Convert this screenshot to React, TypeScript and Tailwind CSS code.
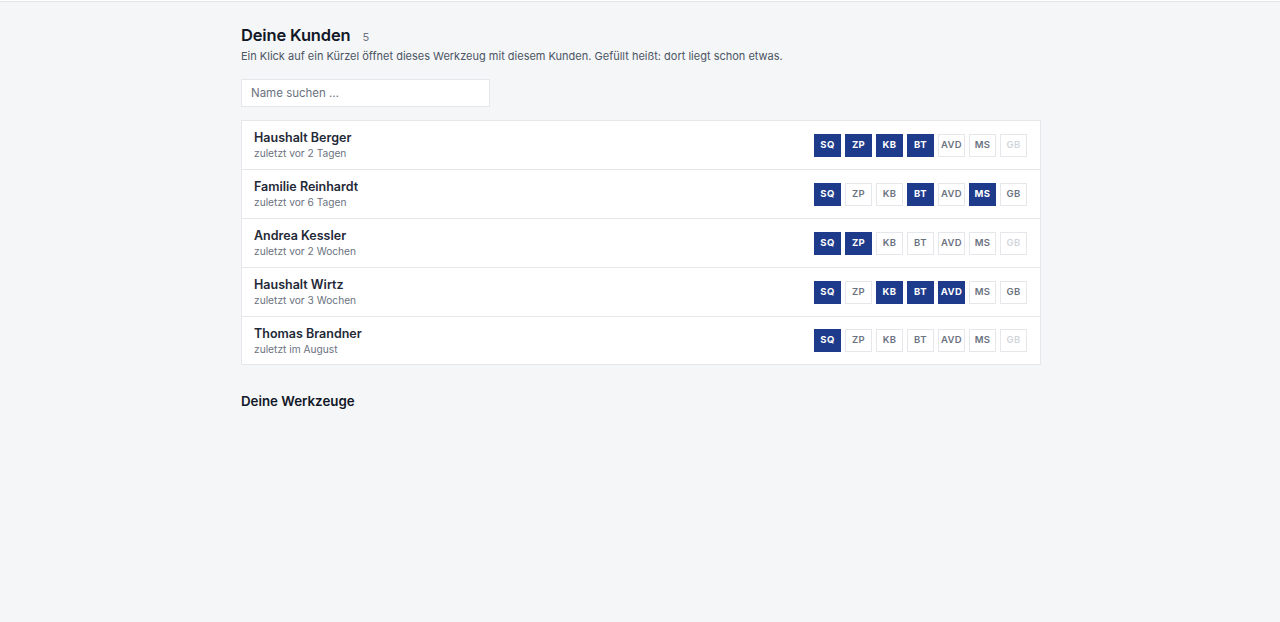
import React from "react";

type Kunde = {
  name: string;
  zuletzt: string;
  filled: string[];
  disabled?: string[];
};

const TOOLS = ["SQ", "ZP", "KB", "BT", "AVD", "MS", "GB"];

const KUNDEN: Kunde[] = [
  { name: "Haushalt Berger", zuletzt: "zuletzt vor 2 Tagen", filled: ["SQ", "ZP", "KB", "BT"], disabled: ["GB"] },
  { name: "Familie Reinhardt", zuletzt: "zuletzt vor 6 Tagen", filled: ["SQ", "BT", "MS"] },
  { name: "Andrea Kessler", zuletzt: "zuletzt vor 2 Wochen", filled: ["SQ", "ZP"], disabled: ["GB"] },
  { name: "Haushalt Wirtz", zuletzt: "zuletzt vor 3 Wochen", filled: ["SQ", "KB", "BT", "AVD"] },
  { name: "Thomas Brandner", zuletzt: "zuletzt im August", filled: ["SQ"], disabled: ["GB"] },
];

function ToolBadge({ label, filled, disabled }: { label: string; filled: boolean; disabled: boolean }) {
  if (filled) {
    return (
      <span className="flex h-[23px] w-[27px] items-center justify-center border border-[#1e3a8a] bg-[#1e3a8a] text-[9.5px] font-bold tracking-[0.04em] text-white">
        {label}
      </span>
    );
  }
  return (
    <span
      className={`flex h-[23px] w-[27px] items-center justify-center border border-[#e5e7eb] bg-white text-[9.5px] font-semibold tracking-[0.04em] ${
        disabled ? "text-[#d1d5db]" : "text-[#6b7280]"
      }`}
    >
      {label}
    </span>
  );
}

export default function App() {
  return (
    <div className="min-h-[622px] bg-[#f5f6f8] font-['Inter',sans-serif] text-[#111827]">
      <div className="h-[2px] border-b border-[#e3e5e9] bg-white" />
      <main className="ml-[241px] w-[800px] pt-[22px]">
        {/* Kunden header */}
        <div className="flex items-baseline gap-3">
          <h1 className="text-[16.5px] font-semibold leading-[22px] tracking-[-0.01em]">Deine Kunden</h1>
          <span className="text-[11px] text-[#6b7280]">5</span>
        </div>
        <p className="mt-[2px] text-[11px] leading-[16px] text-[#4b5563]">
          Ein Klick auf ein Kürzel öffnet dieses Werkzeug mit diesem Kunden. Gefüllt heißt: dort liegt schon etwas.
        </p>

        <input
          type="text"
          placeholder="Name suchen …"
          className="mt-[15px] block h-[28px] w-[249px] border border-[#e5e7eb] bg-white px-[9px] text-[11.5px] placeholder:text-[#6b7280] outline-none"
        />

        {/* Kundenliste */}
        <div className="mt-[13px] border border-[#e5e7eb] bg-white">
          {KUNDEN.map((k, i) => (
            <div
              key={k.name}
              className={`flex box-content items-center justify-between pl-[12px] pr-[13px] ${
                i > 0 ? "border-t border-[#e5e7eb]" : ""
              } ${i === KUNDEN.length - 1 ? "h-[47px]" : "h-[48px]"}`}
            >
              <div className="flex flex-col">
                <span className="text-[12.5px] font-semibold leading-[16px] text-[#1f2937]">{k.name}</span>
                <span className="text-[10.2px] leading-[14px] text-[#6b7280]">{k.zuletzt}</span>
              </div>
              <div className="flex gap-[4px]">
                {TOOLS.map((t) => (
                  <ToolBadge
                    key={t}
                    label={t}
                    filled={k.filled.includes(t)}
                    disabled={!!k.disabled?.includes(t)}
                  />
                ))}
              </div>
            </div>
          ))}
        </div>

        <h2 className="mt-[26px] text-[13.3px] font-semibold leading-[20px] text-[#111827]">Deine Werkzeuge</h2>
      </main>
    </div>
  );
}
